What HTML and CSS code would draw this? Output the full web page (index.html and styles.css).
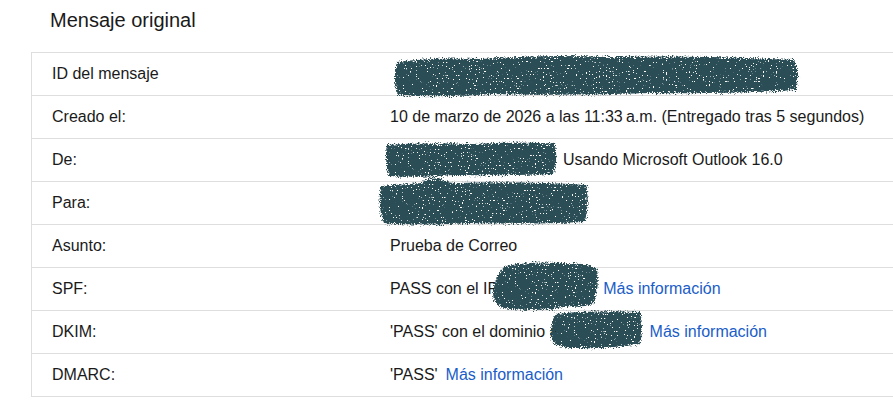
FILE: index.html
```html
<!DOCTYPE html>
<html lang="es">
<head>
<meta charset="utf-8">
<title>Mensaje original</title>
<link rel="stylesheet" href="styles.css">
</head>
<body>
<svg class="defs" width="0" height="0" aria-hidden="true">
  <defs>
    <filter id="scribble" x="-6%" y="-25%" width="112%" height="150%">
      <feTurbulence type="fractalNoise" baseFrequency="0.85" numOctaves="2" seed="7" result="noise"/>
      <feDisplacementMap in="SourceGraphic" in2="noise" scale="7" xChannelSelector="R" yChannelSelector="G" result="disp"/>
      <feTurbulence type="fractalNoise" baseFrequency="0.7" numOctaves="1" seed="2" result="holes"/>
      <feColorMatrix in="holes" type="matrix" values="0 0 0 0 0  0 0 0 0 0  0 0 0 0 0  0 0 0 -26 18.5" result="holemask"/>
      <feComposite in="disp" in2="holemask" operator="in"/>
    </filter>
  </defs>
</svg>

<h1 class="title">Mensaje original</h1>

<div class="table">
  <div class="row"><div class="label">ID del mensaje</div><div class="value"><span class="hidden-id"></span></div></div>
  <div class="row"><div class="label">Creado el:</div><div class="value">10 de marzo de 2026 a las 11:33&#8239;a.m. (Entregado tras 5 segundos)</div></div>
  <div class="row"><div class="label">De:</div><div class="value"><span class="gap-from"></span>Usando Microsoft Outlook 16.0</div></div>
  <div class="row"><div class="label">Para:</div><div class="value"></div></div>
  <div class="row"><div class="label">Asunto:</div><div class="value">Prueba de Correo</div></div>
  <div class="row"><div class="label">SPF:</div><div class="value">PASS con el IP<span class="gap-ip"></span><a class="more" href="#">Más información</a></div></div>
  <div class="row"><div class="label">DKIM:</div><div class="value">'PASS' con el dominio a<span class="gap-dom"></span><a class="more" href="#">Más información</a></div></div>
  <div class="row"><div class="label">DMARC:</div><div class="value">'PASS'<a class="more" href="#">Más información</a></div></div>

  <svg class="redact r-id" viewBox="0 0 410 44" aria-hidden="true">
    <path filter="url(#scribble)" d="M5 8 Q40 3 90 5 Q150 0 220 3 Q300 1 402 6 Q409 20 404 36 Q340 40 260 39 Q180 42 100 40 Q50 44 6 41 Q0 26 5 8 Z"/>
  </svg>
  <svg class="redact r-from" viewBox="0 0 173 37" aria-hidden="true">
    <path filter="url(#scribble)" d="M3 4 Q40 1 90 3 Q140 0 171 3 Q174 18 170 33 Q120 35 70 34 Q30 37 5 35 Q0 20 3 4 Z"/>
  </svg>
  <svg class="redact r-to" viewBox="0 0 211 50" aria-hidden="true">
    <path filter="url(#scribble)" d="M3 10 Q30 8 44 7 Q50 0 62 2 Q66 7 80 7 Q140 5 208 9 Q212 28 207 46 Q150 49 90 47 Q40 50 6 47 Q-1 30 3 10 Z"/>
  </svg>
  <svg class="redact r-ip" viewBox="0 0 108 52" aria-hidden="true">
    <path filter="url(#scribble)" d="M14 5 Q40 0 70 2 Q96 1 106 8 Q109 26 102 43 Q90 47 78 45 Q50 51 20 48 Q2 47 2 32 Q4 14 14 5 Z"/>
  </svg>
  <svg class="redact r-dom" viewBox="0 0 93 41" aria-hidden="true">
    <path filter="url(#scribble)" d="M6 4 Q40 0 90 2 Q94 18 90 34 Q60 39 30 38 Q4 39 1 28 Q0 12 6 4 Z"/>
  </svg>
</div>
</body>
</html>
```

FILE: styles.css
```css
html, body {
  margin: 0;
  padding: 0;
  overflow: hidden;
  background: #fff;
}

body {
  font-family: Arial, "Liberation Sans", Helvetica, sans-serif;
  font-size: 16px;
  color: #1a1a1a;
}

.defs {
  position: absolute;
  width: 0;
  height: 0;
}

.title {
  margin: 0;
  padding: 9px 0 0 50px;
  height: 52px;
  box-sizing: border-box;
  font-size: 20px;
  font-weight: normal;
  line-height: 23px;
  color: #1a1a1a;
}

.table {
  position: relative;
  margin-left: 31px;
  border-top: 1px solid #dedede;
  border-left: 1px solid #dedede;
}

.row {
  display: grid;
  grid-template-columns: 358px 1fr;
  height: 43px;
  box-sizing: border-box;
  border-bottom: 1px solid #dedede;
  align-items: center;
}

.label {
  padding-left: 20px;
  padding-bottom: 1px;
}

.value {
  white-space: nowrap;
  padding-bottom: 1px;
}

.gap-from {
  display: inline-block;
  width: 173px;
}

.gap-ip {
  display: inline-block;
  width: 97px;
}

.gap-dom {
  display: inline-block;
  width: 83px;
}

.more {
  color: #1a5dc8;
  text-decoration: none;
  margin-left: 8px;
}

.redact {
  position: absolute;
  overflow: visible;
  fill: #2b4d56;
}

.r-id { left: 360px; top: 1px; width: 410px; height: 44px; }
.r-from { left: 352px; top: 88px; width: 173px; height: 37px; }
.r-to { left: 346px; top: 123px; width: 211px; height: 50px; }
.r-ip { left: 459px; top: 208px; width: 108px; height: 52px; }
.r-dom { left: 518px; top: 257px; width: 93px; height: 41px; }
```
